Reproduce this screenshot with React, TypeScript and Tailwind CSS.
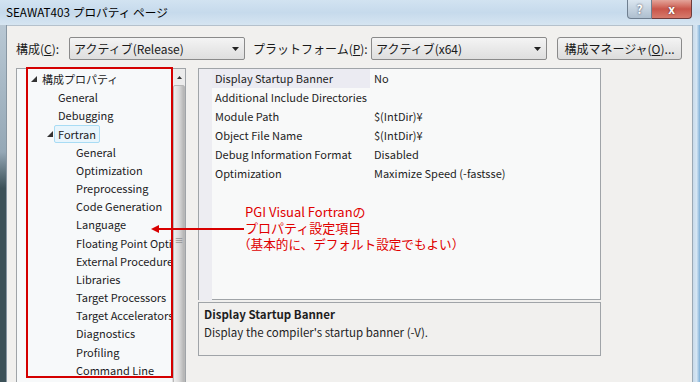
import React from "react";

const font = "font-['Noto_Sans_CJK_JP','Noto_Sans',sans-serif]";

const treeItems: { label: string; level: number; arrow?: boolean; hot?: boolean }[] = [
  { label: "構成プロパティ", level: 0, arrow: true },
  { label: "General", level: 1 },
  { label: "Debugging", level: 1 },
  { label: "Fortran", level: 1, arrow: true, hot: true },
  { label: "General", level: 2 },
  { label: "Optimization", level: 2 },
  { label: "Preprocessing", level: 2 },
  { label: "Code Generation", level: 2 },
  { label: "Language", level: 2 },
  { label: "Floating Point Options", level: 2 },
  { label: "External Procedures", level: 2 },
  { label: "Libraries", level: 2 },
  { label: "Target Processors", level: 2 },
  { label: "Target Accelerators", level: 2 },
  { label: "Diagnostics", level: 2 },
  { label: "Profiling", level: 2 },
  { label: "Command Line", level: 2 },
];

const props = [
  { name: "Display Startup Banner", value: "No", selected: true },
  { name: "Additional Include Directories", value: "" },
  { name: "Module Path", value: "$(IntDir)¥" },
  { name: "Object File Name", value: "$(IntDir)¥" },
  { name: "Debug Information Format", value: "Disabled" },
  { name: "Optimization", value: "Maximize Speed (-fastsse)" },
];

function Combo({ text }: { text: string }) {
  return (
    <div className="flex h-[23px] w-[176px] items-center justify-between rounded-[2px] border border-[#8a8a8a] bg-gradient-to-b from-[#f4f4f4] to-[#dedede] pl-[4px] pr-[5px] text-[12px] text-[#1a1a1a]">
      <span>{text}</span>
      <svg width="7" height="4" viewBox="0 0 7 4">
        <path d="M0 0h7L3.5 4z" fill="#222" />
      </svg>
    </div>
  );
}

function Triangle() {
  return (
    <svg width="6" height="6" viewBox="0 0 6 6">
      <path d="M6 0V6H0z" fill="#333" />
    </svg>
  );
}

export default function App() {
  return (
    <div className={`relative flex h-[382px] w-[700px] flex-col overflow-hidden bg-[#c9dcec] ${font}`}>
      {/* title bar */}
      <div className="flex h-[25px] shrink-0 items-start justify-between bg-gradient-to-b from-[#d2e3f1] via-[#c6daec] to-[#d6e5f1]">
        <div className="pl-[6px] pt-[3px] text-[11.7px] leading-[18px] text-black">SEAWAT403 プロパティ ページ</div>
        <div className="mr-[8px] flex">
          <div className="flex h-[19px] w-[25px] items-center justify-center rounded-bl-[4px] border border-t-0 border-[#6f7f90] bg-gradient-to-b from-[#dbe6f0] to-[#aebfcf] text-[12px] font-bold text-white [text-shadow:0_0_2px_#334]">
            ?
          </div>
          <div className="flex h-[19px] w-[40px] items-center justify-center rounded-br-[4px] border border-l-0 border-t-0 border-[#6f3a3a] bg-gradient-to-b from-[#e3a49a] via-[#c9554a] to-[#d67a6c] text-[12px] font-bold text-white [text-shadow:0_0_2px_#422]">
            x
          </div>
        </div>
      </div>

      <div className="flex flex-1">
        {/* left frame */}
        <div className="w-[6px] shrink-0 bg-gradient-to-b from-[#b9c8d4] via-[#95a8b6] via-[35%] to-[#3c5158] to-[45%]" />
        <div className="w-px shrink-0 bg-[#8896a2]" />

        {/* client */}
        <div className="relative flex flex-1 flex-col border-t border-[#b5c1cc] bg-[#f1f0ee] pl-[9px]">
          <div className="mt-[11px] flex items-center text-[12px] text-[#1a1a1a]">
            <span className="w-[53px]">
              構成(<span className="underline">C</span>):
            </span>
            <Combo text="アクティブ(Release)" />
            <span className="ml-[8px] w-[118px]">
              プラットフォーム(<span className="underline">P</span>):
            </span>
            <Combo text="アクティブ(x64)" />
            <div className="ml-[10px] flex h-[23px] w-[125px] items-center justify-center rounded-[3px] border border-[#8a8a8a] bg-gradient-to-b from-[#f4f4f4] to-[#dcdcdc] text-[12px]">
              構成マネージャ(<span className="underline">O</span>)...
            </div>
          </div>

          <div className="mt-[8px] flex flex-1 items-start">
            {/* tree */}
            <div className="flex h-[320px] w-[170px] shrink-0 border border-[#a0a4a8] bg-[#f7f9fa]">
              <div className="min-w-0 flex-1 overflow-hidden pt-[1px] text-[11px] text-[#1c1c24]">
                {treeItems.map((t, i) => (
                  <div
                    key={i}
                    className={`flex h-[18.2px] items-center overflow-hidden whitespace-nowrap ${
                      t.level === 0 ? "pl-[14px]" : t.level === 1 ? "pl-[30px]" : "pl-[48px]"
                    }`}
                  >
                    <span className="flex w-[11px] shrink-0">{t.arrow ? <Triangle /> : null}</span>
                    <span
                      className={
                        t.hot
                          ? "-ml-[4px] rounded-[2px] border border-[#a8dcf4] bg-[#e8f5fc] px-[3px] leading-[16px]"
                          : ""
                      }
                    >
                      {t.label}
                    </span>
                  </div>
                ))}
              </div>
              {/* scrollbar */}
              <div className="flex w-[13px] shrink-0 flex-col border-l border-[#e0e0e0] bg-[#ececec]">
                <div className="flex h-[16px] shrink-0 items-center justify-center">
                  <svg width="5" height="3" viewBox="0 0 5 3">
                    <path d="M0 3h5L2.5 0z" fill="#333" />
                  </svg>
                </div>
                <div className="flex flex-1 items-start justify-center rounded-[2px] border border-[#b8b8b8] bg-gradient-to-r from-[#eeeeee] via-[#dadada] to-[#b4b4b4] pt-[150px] text-[9px] leading-[9px] text-[#777]">
                  ≡
                </div>
              </div>
            </div>

            {/* property grid */}
            <div className="ml-[12px] flex w-[403px] shrink-0 flex-col">
              <div className="h-[232px] border border-[#a0a4a8] bg-[#f8f9f9] text-[11px] text-[#1e1e1e]">
                {props.map((p, i) => (
                  <div key={i} className="flex h-[19px] items-center whitespace-nowrap">
                    <div className="h-full w-[13px] shrink-0 bg-[#ededf2]" />
                    <div className={`flex h-full w-[158px] shrink-0 items-center pl-[3px] ${p.selected ? "bg-[#ebebf2]" : ""}`}>
                      {p.name}
                    </div>
                    <div className="pl-[4px]">{p.value}</div>
                  </div>
                ))}
                <div className="flex h-[118px]">
                  <div className="w-[13px] bg-[#ededf2]" />
                </div>
              </div>
              <div className="mt-[2px] h-[54px] border border-[#a0a4a8] px-[5px] pt-[2px] text-[11.5px] text-[#1e1e1e]">
                <div className="font-bold leading-[18px]">Display Startup Banner</div>
                <div className="leading-[18px]">Display the compiler's startup banner (-V).</div>
              </div>
            </div>
          </div>
        </div>

        {/* right frame */}
        <div className="w-px shrink-0 bg-[#9aa8b4]" />
        <div className="w-[7px] shrink-0 bg-gradient-to-r from-[#c8daea] via-[#d6e6f3] to-[#7fb0d8]" />
      </div>

      {/* red highlight over tree */}
      <div className="pointer-events-none absolute left-[26px] top-[67px] h-[311px] w-[147px] border-2 border-[#d40000]" />

      {/* arrow */}
      <svg className="pointer-events-none absolute left-[150px] top-[224px]" width="96" height="10" viewBox="0 0 96 10">
        <path d="M8 5H94" stroke="#d80000" strokeWidth="2" />
        <path d="M1 5L9 1V9z" fill="#d80000" />
      </svg>

      {/* annotation */}
      <div className="pointer-events-none absolute left-[238px] top-[204px] text-[13px] leading-[16px] text-[#e00000]">
        <div className="pl-[7px]">PGI Visual Fortranの</div>
        <div className="pl-[7px]">プロパティ設定項目</div>
        <div className="text-[12.6px]">（基本的に、デフォルト設定でもよい）</div>
      </div>
    </div>
  );
}
